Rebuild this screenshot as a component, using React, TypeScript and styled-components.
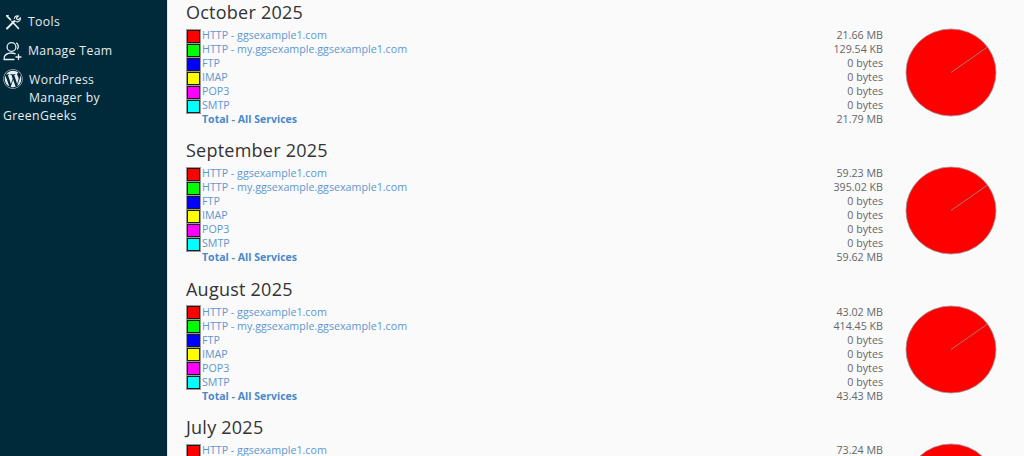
import React from "react";
import styled, { createGlobalStyle } from "styled-components";
import { FaWordpress } from "react-icons/fa";

const Global = createGlobalStyle`
  html, body { margin: 0; padding: 0; height: 100%; overflow: hidden; background: #fafafa; }
  #root { height: 100%; }
`;
const Page = styled.div`
  display: flex; width: 1024px; height: 456px; overflow: hidden;
  font-family: "Open Sans", "Liberation Sans", sans-serif;
`;
const Sidebar = styled.nav`
  flex: 0 0 167px; background: #00293a; border-right: 1px solid #e4e7e9;
  padding-top: 11px; box-sizing: content-box; color: #e6eef2; font-size: 12.25px; letter-spacing: .35px;
`;
const NavItem = styled.div`
  display: flex; align-items: center; gap: 5px; height: 22px; padding-left: 3px; margin-bottom: 7px; line-height: 22px;
`;
const IconSlot = styled.span`
  flex: 0 0 20px; height: 20px; display: flex; align-items: center; justify-content: center;
`;
const WpItem = styled.div`
  line-height: 17.5px; padding-left: 3px;
`;
const WpIcon = styled.span`
  display: inline-block; width: 19px; height: 20px; margin-right: 7px; vertical-align: -5px; color: #e6eef2;
`;
const WpIndent = styled.span`
  display: block; padding-left: 26px;
`;
const Main = styled.main`
  flex: 1; min-width: 0; padding: 0 27px 0 18px; overflow: hidden;
`;
const Section = styled.section`
  height: 138.4px;
`;
const Title = styled.h2`
  margin: 0; padding-top: 1px; height: 27px; font-size: 18px; font-weight: 400; line-height: 22px; color: #333; letter-spacing: .24px;
`;
const Body = styled.div`
  display: flex; align-items: flex-start;
`;
const Rows = styled.div`
  flex: 1; min-width: 0;
`;
const Row = styled.div`
  display: flex; align-items: center; height: 14px; font-size: 10.7px; line-height: 14px;
`;
const Swatch = styled.span<{ $c: string }>`
  flex: 0 0 auto; width: 11px; height: 11px; border: 2px solid #1c1c1c; outline: 1px solid #999; outline-offset: -1px; background: ${p => p.$c}; margin: 2px 1px 0 0;
  box-sizing: content-box;
`;
const Spacer = styled.span`
  flex: 0 0 16px;
`;
const Service = styled.a<{ $bold?: boolean }>`
  flex: 1; color: #5e97cf; font-weight: ${p => (p.$bold ? 700 : 400)};
  ${p => p.$bold && "color: #4a89c9; font-size: 10.55px;"}
`;
const Size = styled.span`
  color: #666; text-align: right; white-space: nowrap;
`;
const Pie = styled.svg`
  flex: 0 0 auto; margin: 0 0 0 22px; display: block;
`;

const colors = ["#f00", "#0f0", "#00f", "#ff0", "#f0f", "#0ff"];
const names = ["HTTP - ggsexample1.com", "HTTP - my.ggsexample.ggsexample1.com", "FTP", "IMAP", "POP3", "SMTP"];
const months = [
  { t: "October 2025", a: "21.66 MB", b: "129.54 KB", c: "21.79 MB" },
  { t: "September 2025", a: "59.23 MB", b: "395.02 KB", c: "59.62 MB" },
  { t: "August 2025", a: "43.02 MB", b: "414.45 KB", c: "43.43 MB" },
  { t: "July 2025", a: "73.24 MB", b: "", c: "" },
];

export default function App() {
  return (
    <Page>
      <Global />
      <Sidebar>
        <NavItem>
          <IconSlot>
            <svg width="18" height="18" viewBox="0 0 18 18" fill="none" stroke="#e6eef2" strokeLinecap="round">
              <path d="M3 15.500 10.500 8" strokeWidth="2" />
              <path d="M10.400 5.500c.2-1.900 2.100-3.100 4-2.500l-2 2 .6 1.300 1.300.6 2-2c.5 1.900-.7 3.700-2.600 4-.7.1-1.300 0-1.900-.3" strokeWidth="1.100" />
              <path d="M3 3.200 6.500 6.700M8 8.500 14.500 15.500" strokeWidth="1.700" />
              <path d="M2.600 2.600 4.200 2.600" strokeWidth="1.400" />
            </svg>
          </IconSlot>
          Tools
        </NavItem>
        <NavItem>
          <IconSlot>
            <svg width="20" height="20" viewBox="0 0 20 20" fill="none" stroke="#e6eef2" strokeWidth="1.300" strokeLinecap="round">
              <circle cx="8.500" cy="6" r="4.400" />
              <path d="M13.500 2.200c1.800 .9 2.500 3.600 1 5.800" />
              <path d="M1 18.200c0-4 3-6.200 7.500-6.200 1.500 0 2.700.3 3.700.8M1 18.500h10" />
              <path d="M15.500 13.500v5M13 16h5" />
            </svg>
          </IconSlot>
          Manage Team
        </NavItem>
        <WpItem>
          <WpIcon><FaWordpress size={20} /></WpIcon>WordPress
          <WpIndent>Manager by</WpIndent>
          GreenGeeks
        </WpItem>
      </Sidebar>
      <Main>
        {months.map(m => (
          <Section key={m.t}>
            <Title>{m.t}</Title>
            <Body>
              <Rows>
                {names.map((n, i) => (
                  <Row key={n}>
                    <Swatch $c={colors[i]} />
                    <Service>{n}</Service>
                    <Size>{i === 0 ? m.a : i === 1 ? m.b : "0 bytes"}</Size>
                  </Row>
                ))}
                <Row>
                  <Spacer />
                  <Service $bold>Total - All Services</Service>
                  <Size>{m.c}</Size>
                </Row>
              </Rows>
              <Pie width="92" height="90" viewBox="0 0 92 90">
                <ellipse cx="46" cy="44.500" rx="45" ry="43.500" fill="#f00" stroke="#999" strokeWidth=".8" />
                <path d="M46 44.500 82.500 19" stroke="#a77" strokeWidth="1" />
              </Pie>
            </Body>
          </Section>
        ))}
      </Main>
    </Page>
  );
}
